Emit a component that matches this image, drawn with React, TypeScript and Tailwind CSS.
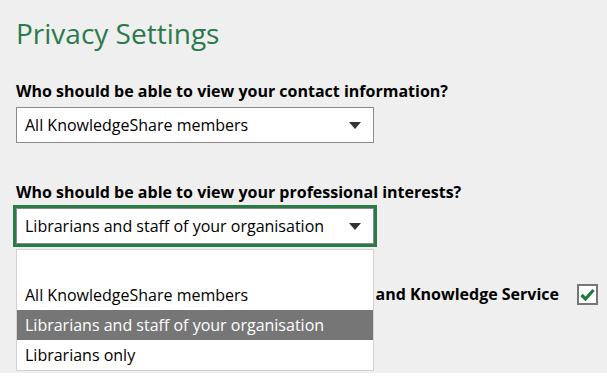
import React, { useState } from 'react';

const options = [
  'All KnowledgeShare members',
  'Librarians and staff of your organisation',
  'Librarians only',
];

const Arrow: React.FC = () => (
  <svg width="12" height="7" viewBox="0 0 12 7" className="shrink-0">
    <path d="M0 0h12L6 7z" fill="#333" />
  </svg>
);

const PrivacySettings: React.FC = () => {
  const [contact] = useState(options[0]);
  const [interests] = useState(options[1]);

  return (
    <div className="min-h-[373px] bg-[#efefef] px-4 pt-[13px] font-['Open_Sans',sans-serif] text-black">
      <h1 className="text-[28px] leading-[40px] text-[#2b7a4b]">Privacy Settings</h1>

      <div className="mt-[27px] text-[16px] font-bold leading-[22px]">
        Who should be able to view your contact information?
      </div>
      <div className="mt-[5px] flex h-[36px] w-[358px] items-center justify-between border border-[#8a8a8a] bg-white pl-2 pr-3">
        <span className="text-[16px]">{contact}</span>
        <Arrow />
      </div>

      <div className="mt-[38px] text-[16px] font-bold leading-[22px]">
        Who should be able to view your professional interests?
      </div>
      <div className="relative mt-[5px] w-[358px]">
        <div className="flex h-[36px] items-center justify-between border border-[#8a8a8a] bg-white pl-2 pr-3 outline-[3px] outline-solid outline-[#2a7a47]">
          <span className="text-[16px]">{interests}</span>
          <Arrow />
        </div>
        <div className="absolute left-0 top-full z-10 mt-[5px] w-[358px] border border-[#d2d2d2] bg-white pt-[30px]">
          {options.map(o => (
            <div
              key={o}
              className={`flex h-[30px] items-center px-2 text-[16px] ${o === interests ? 'bg-[#767676] text-white' : ''}`}
            >
              {o}
            </div>
          ))}
        </div>
      </div>

      <div className="mt-[39px] flex items-center justify-end gap-[18px] pr-[9px] -mr-4">
        <span className="whitespace-nowrap text-[16px] font-bold leading-[22px]">and Knowledge Service</span>
        <span className="flex h-[21px] w-[21px] items-center justify-center border-2 border-[#777] bg-white">
          <svg width="15" height="13" viewBox="0 0 15 13">
            <path d="M1.5 7l4 4L13.5 2" fill="none" stroke="#1d7a3e" strokeWidth="3.2" />
          </svg>
        </span>
      </div>
    </div>
  );
};

export default function App() {
  return <PrivacySettings />;
}
